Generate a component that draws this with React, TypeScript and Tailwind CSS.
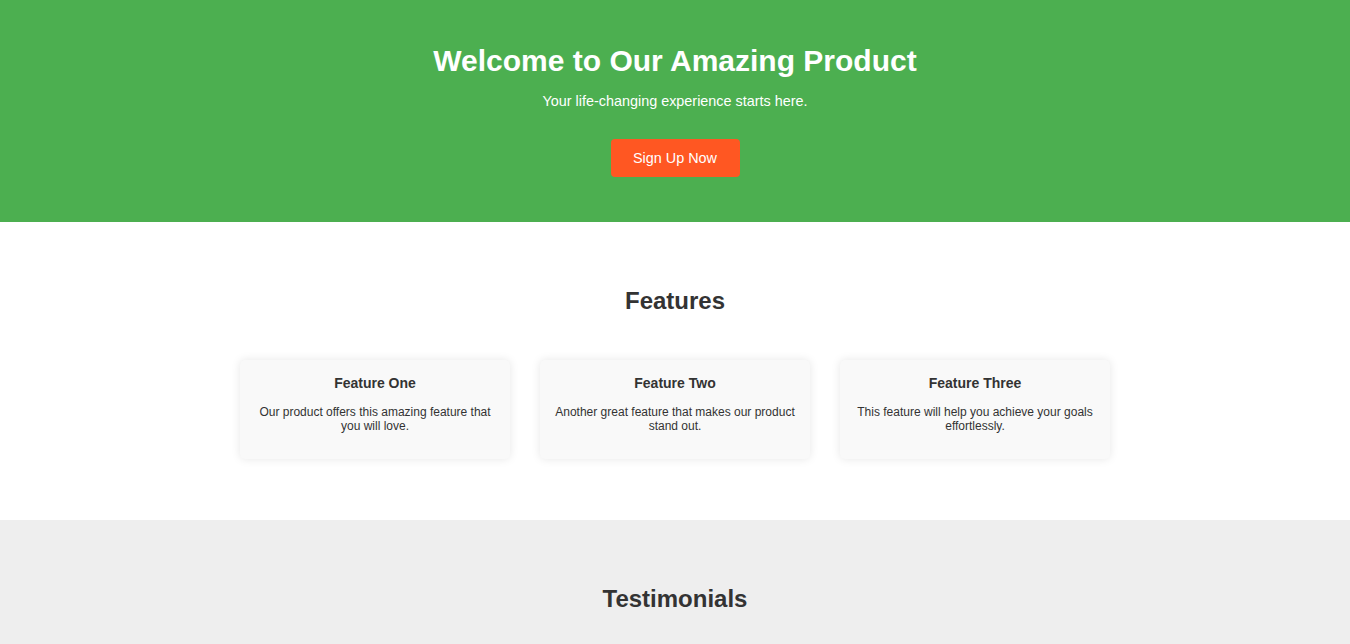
const features = [
  { title: "Feature One", text: "Our product offers this amazing feature that you will love." },
  { title: "Feature Two", text: "Another great feature that makes our product stand out." },
  { title: "Feature Three", text: "This feature will help you achieve your goals effortlessly." },
];

const testimonials = [
  { quote: "This product changed my life! Highly recommend it.", name: "Happy Customer" },
  { quote: "Amazing quality and fantastic support.", name: "Satisfied User" },
];

export default function App() {
  return (
    <div className="min-h-screen bg-white text-[#333] font-['Liberation_Sans',Arial,sans-serif]">
      {/* Hero */}
      <header className="bg-[#4CAF50] text-white text-center px-5 pt-[44px] pb-[45px]">
        <h1 className="text-[30px] leading-[34px] font-bold">Welcome to Our Amazing Product</h1>
        <p className="mt-[15px] text-[14.4px] leading-[17px]">Your life-changing experience starts here.</p>
        <button className="mt-[29px] h-[38px] w-[129px] pt-px bg-[#FF5722] text-white text-[14.4px] rounded-[4px]">
          Sign Up Now
        </button>
      </header>

      {/* Features */}
      <section className="px-5 pt-[65px] pb-[61px] text-center">
        <h2 className="text-[24px] leading-[28px] font-bold">Features</h2>
        <div className="mt-[45px] flex justify-center gap-[30px]">
          {features.map((f) => (
            <div
              key={f.title}
              className="w-[270px] h-[99px] bg-[#f9f9f9] rounded-[5px] shadow-[0_0_10px_rgba(0,0,0,0.1)] px-[15px] pt-[15px]"
            >
              <h3 className="text-[14px] leading-[16px] font-bold">{f.title}</h3>
              <p className="mt-[14px] text-[12px] leading-[14px]">{f.text}</p>
            </div>
          ))}
        </div>
      </section>

      {/* Testimonials */}
      <section className="bg-[#eeeeee] px-5 pt-[65px] pb-[60px] text-center">
        <h2 className="text-[24px] leading-[28px] font-bold">Testimonials</h2>
        <div className="mt-[40px] flex flex-col items-center gap-5">
          {testimonials.map((t) => (
            <div key={t.name} className="max-w-[600px] text-[14px]">
              <p className="italic">"{t.quote}"</p>
              <p className="mt-2 font-bold">- {t.name}</p>
            </div>
          ))}
        </div>
      </section>
    </div>
  );
}
